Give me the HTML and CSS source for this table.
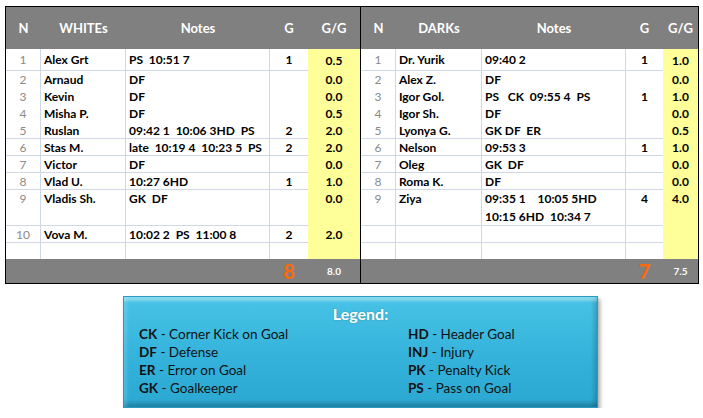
FILE: index.html
```html
<!DOCTYPE html>
<html>
<head>
<meta charset="utf-8">
<link rel="stylesheet" href="styles.css">
</head>
<body>
<div class="page">
  <div class="board">
    <div class="team left">
      <div class="row head"><div>N</div><div>WHITEs</div><div>Notes</div><div>G</div><div>G/G</div></div>
      <div class="row h22 line"><div class="n">1</div><div class="nm">Alex Grt</div><div class="nt">PS  10:51 7</div><div class="g">1</div><div class="gg">0.5</div></div>
      <div class="row h17"><div class="n">2</div><div class="nm">Arnaud</div><div class="nt">DF</div><div class="g"></div><div class="gg">0.0</div></div>
      <div class="row h17"><div class="n">3</div><div class="nm">Kevin</div><div class="nt">DF</div><div class="g"></div><div class="gg">0.0</div></div>
      <div class="row h17"><div class="n">4</div><div class="nm">Misha P.</div><div class="nt">DF</div><div class="g"></div><div class="gg">0.5</div></div>
      <div class="row h17 line"><div class="n">5</div><div class="nm">Ruslan</div><div class="nt">09:42 1  10:06 3HD  PS</div><div class="g">2</div><div class="gg">2.0</div></div>
      <div class="row h17 line"><div class="n">6</div><div class="nm">Stas M.</div><div class="nt">late  10:19 4  10:23 5  PS</div><div class="g">2</div><div class="gg">2.0</div></div>
      <div class="row h17 line"><div class="n">7</div><div class="nm">Victor</div><div class="nt">DF</div><div class="g"></div><div class="gg">0.0</div></div>
      <div class="row h17 line"><div class="n">8</div><div class="nm">Vlad U.</div><div class="nt">10:27 6HD</div><div class="g">1</div><div class="gg">1.0</div></div>
      <div class="row h36 line top"><div class="n">9</div><div class="nm">Vladis Sh.</div><div class="nt">GK  DF</div><div class="g"></div><div class="gg">0.0</div></div>
      <div class="row h17 line"><div class="n">10</div><div class="nm">Vova M.</div><div class="nt">10:02 2  PS  11:00 8</div><div class="g">2</div><div class="gg">2.0</div></div>
      <div class="row h16"><div class="n"></div><div class="nm"></div><div class="nt"></div><div class="g"></div><div class="gg"></div></div>
      <div class="row foot"><div></div><div></div><div></div><div class="big">8</div><div class="small">8.0</div></div>
    </div>
    <div class="team right">
      <div class="row head"><div>N</div><div>DARKs</div><div>Notes</div><div>G</div><div>G/G</div></div>
      <div class="row h22 line"><div class="n">1</div><div class="nm">Dr. Yurik</div><div class="nt">09:40 2</div><div class="g">1</div><div class="gg">1.0</div></div>
      <div class="row h17"><div class="n">2</div><div class="nm">Alex Z.</div><div class="nt">DF</div><div class="g"></div><div class="gg">0.0</div></div>
      <div class="row h17"><div class="n">3</div><div class="nm">Igor Gol.</div><div class="nt">PS   CK  09:55 4  PS</div><div class="g">1</div><div class="gg">1.0</div></div>
      <div class="row h17"><div class="n">4</div><div class="nm">Igor Sh.</div><div class="nt">DF</div><div class="g"></div><div class="gg">0.0</div></div>
      <div class="row h17 line"><div class="n">5</div><div class="nm">Lyonya G.</div><div class="nt">GK DF  ER</div><div class="g"></div><div class="gg">0.5</div></div>
      <div class="row h17 line"><div class="n">6</div><div class="nm">Nelson</div><div class="nt">09:53 3</div><div class="g">1</div><div class="gg">1.0</div></div>
      <div class="row h17 line"><div class="n">7</div><div class="nm">Oleg</div><div class="nt">GK  DF</div><div class="g"></div><div class="gg">0.0</div></div>
      <div class="row h17 line"><div class="n">8</div><div class="nm">Roma K.</div><div class="nt">DF</div><div class="g"></div><div class="gg">0.0</div></div>
      <div class="row h36 line top"><div class="n">9</div><div class="nm">Ziya</div><div class="nt">09:35 1    10:05 5HD
10:15 6HD  10:34 7</div><div class="g">4</div><div class="gg">4.0</div></div>
      <div class="row h17 line"><div class="n"></div><div class="nm"></div><div class="nt"></div><div class="g"></div><div class="gg"></div></div>
      <div class="row h16"><div class="n"></div><div class="nm"></div><div class="nt"></div><div class="g"></div><div class="gg"></div></div>
      <div class="row foot"><div></div><div></div><div></div><div class="big">7</div><div class="small">7.5</div></div>
    </div>
  </div>

  <div class="legend">
    <div class="legend-title">Legend:</div>
    <div class="legend-grid">
      <div><b>CK</b> - Corner Kick on Goal</div>
      <div><b>HD</b> - Header Goal</div>
      <div><b>DF</b> - Defense</div>
      <div><b>INJ</b> - Injury</div>
      <div><b>ER</b> - Error on Goal</div>
      <div><b>PK</b> - Penalty Kick</div>
      <div><b>GK</b> - Goalkeeper</div>
      <div><b>PS</b> - Pass on Goal</div>
    </div>
  </div>
</div>
</body>
</html>
```

FILE: styles.css
```css
html, body {
  margin: 0;
  padding: 0;
  background: #ffffff;
}

.page {
  padding: 6px 0 0 5px;
  font-family: "Lato", "Liberation Sans", sans-serif;
}

.board {
  display: flex;
  width: 694px;
  box-sizing: border-box;
  border: 1px solid #000;
}

.team.left {
  width: 354px;
  border-right: 1px solid #000;
}

.team.right {
  width: 337px;
}

.row {
  display: grid;
  box-sizing: border-box;
}

.left .row {
  grid-template-columns: 35px 85px 144px 38px 52px;
}

.right .row {
  grid-template-columns: 35px 86px 144px 37px 35px;
}

.row > div {
  box-sizing: border-box;
  white-space: pre;
  font-size: 12px;
  font-weight: 700;
  color: #000;
  display: flex;
  align-items: center;
  overflow: hidden;
}

.head {
  height: 42px;
  background: #808080;
}

.head > div {
  justify-content: center;
  color: #fff;
  font-size: 13px;
  font-weight: 700;
}

.h22 { height: 22px; }
.h17 { height: 17px; }
.h16 { height: 16px; }
.h36 { height: 36px; }

.row .n,
.row .nm,
.row .nt {
  border-right: 1px solid #d0d7e5;
}

.line .n,
.line .nm,
.line .nt,
.line .g {
  border-bottom: 1px solid #d0d7e5;
}

.row .n {
  justify-content: center;
  color: #8a8a8a;
  font-weight: 400;
}

.row .nm,
.row .nt {
  padding-left: 3px;
}

.row .g,
.row .gg {
  justify-content: center;
}

.row .gg {
  background: #ffff99;
}

.top > div {
  align-items: flex-start;
  line-height: 18px;
}

.foot {
  height: 24px;
  background: #808080;
}

.foot > div {
  justify-content: center;
}

.foot .big {
  color: #fa6a0c;
  font-size: 20px;
  font-weight: 700;
}

.foot .small {
  color: #fff;
  font-size: 10px;
  font-weight: 700;
}

.legend {
  margin: 12px 0 0 118px;
  width: 475px;
  height: 112px;
  box-sizing: border-box;
  padding: 6px 0 0 15px;
  background: linear-gradient(#48c3e6, #33b1da 60%, #2ba8d2);
  border: 1px solid #2a9cc4;
  box-shadow:
    inset 0 7px 3px -3px rgba(255, 255, 255, 0.35),
    inset 6px 0 3px -3px rgba(255, 255, 255, 0.15),
    inset -6px 0 4px -3px rgba(0, 0, 0, 0.18),
    inset 0 -7px 4px -3px rgba(0, 0, 0, 0.22),
    2px 3px 4px rgba(0, 0, 0, 0.35);
  color: #111;
}

.legend-title {
  text-align: center;
  color: #fff;
  font-weight: 700;
  font-size: 16px;
  line-height: 22px;
  padding-right: 15px;
  text-shadow: 0 0 2px rgba(0, 0, 0, 0.25);
}

.legend-grid {
  display: grid;
  grid-template-columns: 269px 1fr;
  font-size: 13.5px;
  line-height: 18px;
}

.legend-grid b {
  font-weight: 700;
}
```
